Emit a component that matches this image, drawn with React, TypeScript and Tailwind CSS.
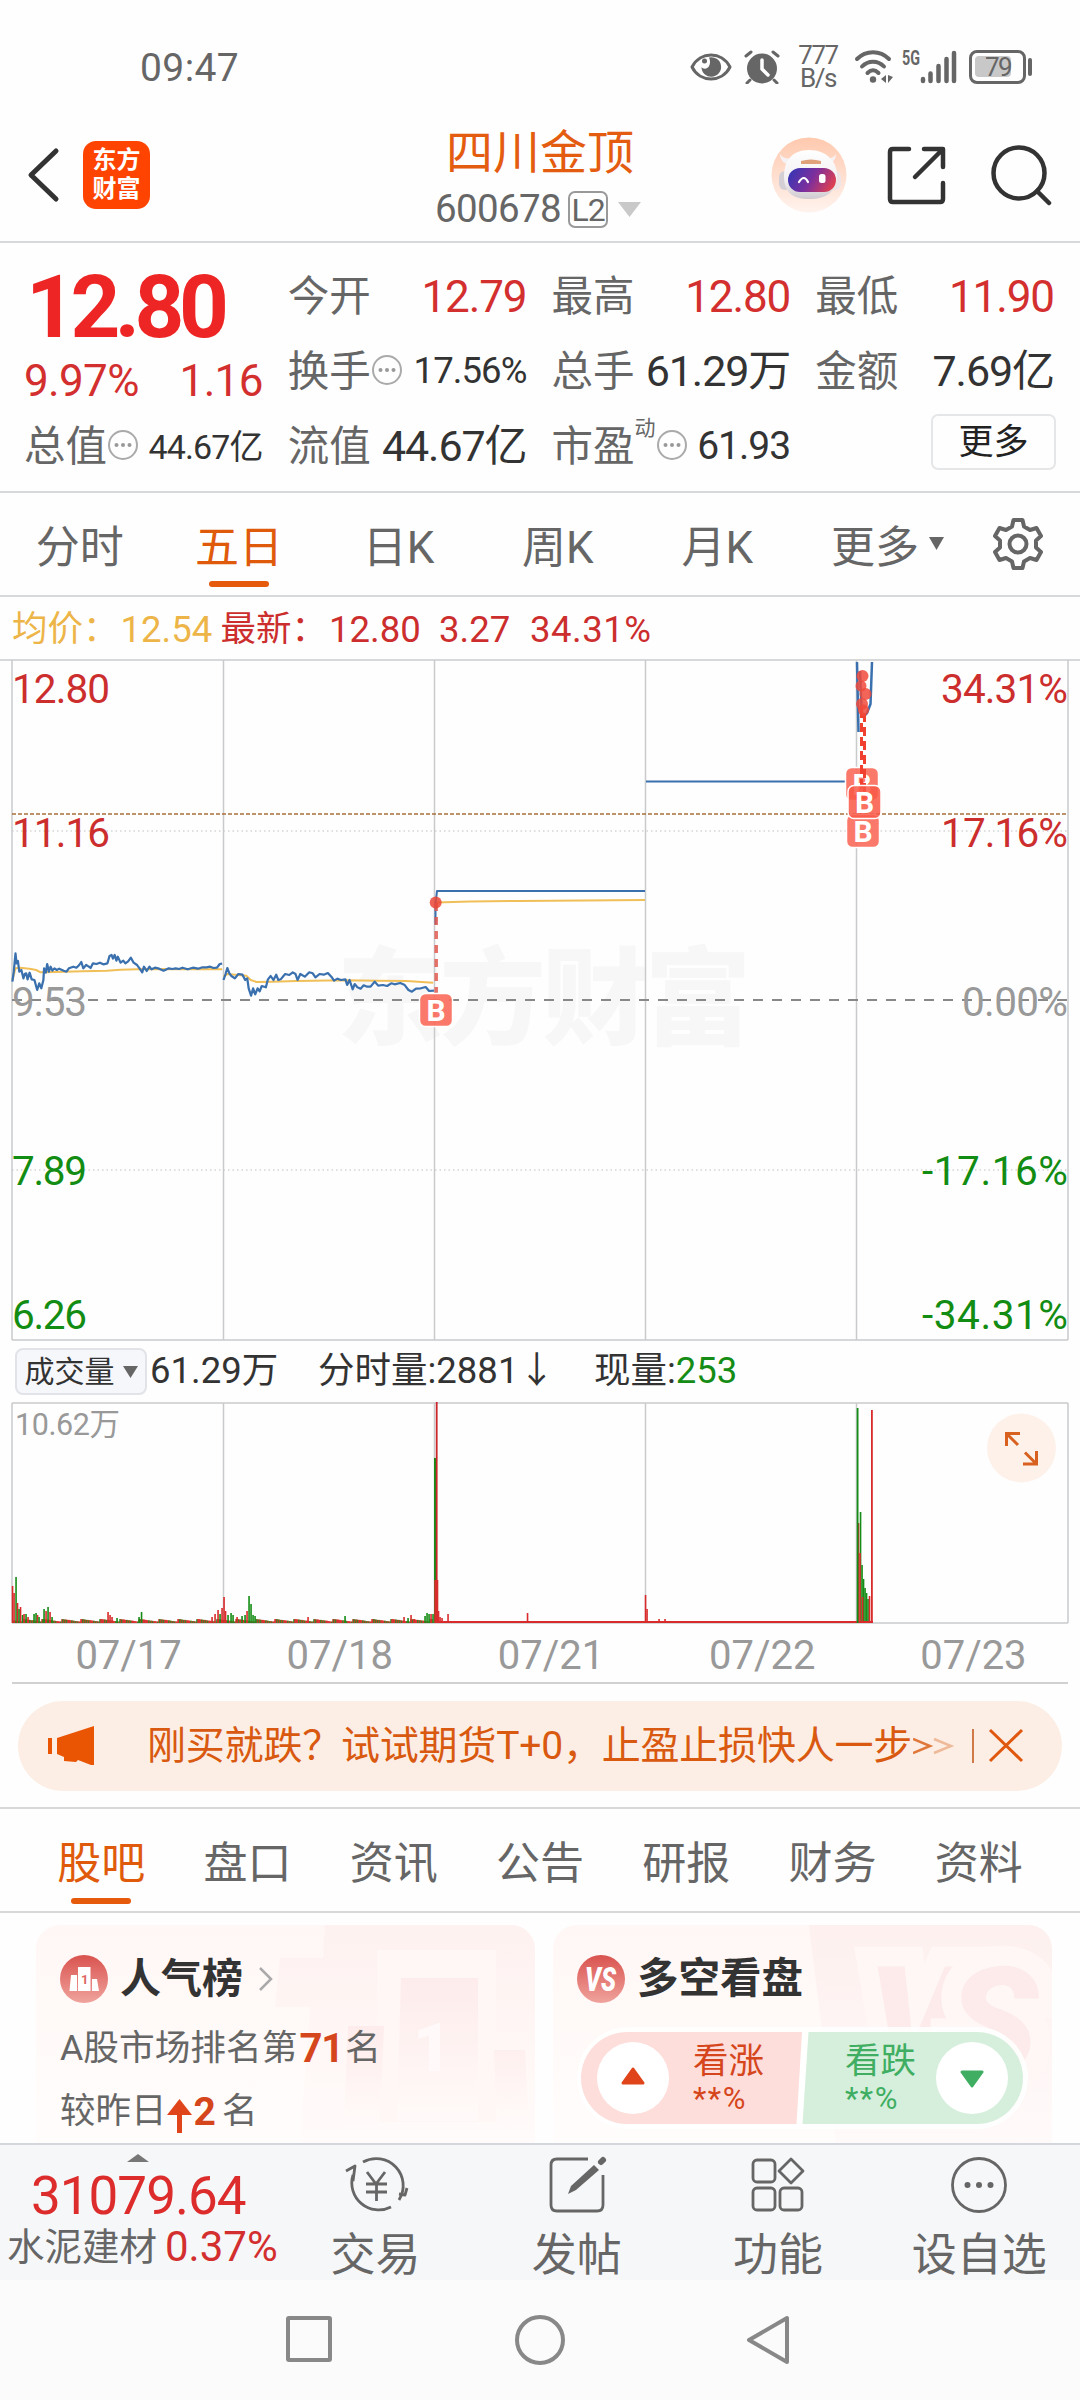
import type { ReactNode } from "react";
import clsx from "clsx";

const GRID_X = [12, 223.5, 434.5, 645.5, 856.5, 1068];
const DATES = ["07/17", "07/18", "07/21", "07/22", "07/23"];

// intraday prices, in chart units (see the scaled group in PriceChart)
const DAY1 =
  "36,245 40,215 45,160 48,190 52,183 56,215 62,210 68,235 72,222 76,220 80,238 86,218 92,238 100,240 108,270 114,250 120,265 126,240 128,205 133,218 137,192 142,215 147,200 152,212 158,205 165,210 172,206 185,212 193,215 200,205 213,200 222,203 230,195 236,186 242,205 250,195 258,200 263,204 270,190 280,192 290,188 300,193 312,190 318,168 324,165 328,176 333,165 338,182 342,170 350,188 358,182 364,190 372,184 380,173 388,188 398,195 405,205 413,217 418,200 426,213 434,200 440,208 450,203 462,206 475,212 490,205 500,207 510,205 520,207 530,203 545,208 560,203 575,206 588,202 600,202 610,200 620,204 630,203 638,192 645,191";
const DAY1_AVG = "36,240 45,205 60,203 90,207 105,210 118,217 160,216 240,214 310,212 350,209 420,207 645,208";
const DAY2 =
  "649,240 655,222 660,204 666,220 672,228 682,235 692,222 704,224 712,240 718,235 722,265 729,287 735,265 741,283 748,265 754,274 760,258 772,262 778,238 786,228 794,240 802,224 808,240 815,238 828,222 840,225 850,217 858,222 864,240 872,222 885,230 898,217 908,220 916,232 928,222 940,224 952,219 962,230 970,242 980,236 990,240 1003,238 1008,255 1015,240 1024,268 1030,252 1038,262 1047,266 1056,256 1066,260 1076,260 1088,245 1098,257 1112,255 1124,258 1136,250 1146,253 1162,249 1174,254 1186,270 1196,275 1208,266 1222,265 1236,261 1246,273 1260,272";
const DAY2_AVG = "649,230 660,222 715,227 728,240 745,246 790,245 860,243 1000,241 1100,242 1180,243 1258,248";

const RED = "#d92b2b";
const GREEN = "#158c15";

type Bar = [x: number, height: number, color: string];

const SPIKES: Bar[] = [
  [12.5, 37, RED], [14, 30, RED], [16, 46, GREEN], [17.5, 20, RED], [19, 14, GREEN], [20.5, 16, RED], [22.5, 8, GREEN],
  [24, 9, RED], [26, 9, GREEN], [28, 6, RED], [34, 9, GREEN], [36, 10, GREEN], [37.5, 8, RED], [39, 6, GREEN],
  [44, 14, GREEN], [46, 12, RED], [48, 16, GREEN], [50, 11, RED], [52, 6, GREEN], [108, 11, RED], [110, 8, RED],
  [112, 6, RED], [117, 5, GREEN], [139, 6, GREEN], [141.5, 11, GREEN], [212, 6, RED], [215, 9, RED], [218, 13, RED],
  [220, 9, GREEN], [222, 15, RED], [224, 26, RED], [225.5, 12, RED], [228, 8, GREEN], [231, 10, GREEN], [233, 8, GREEN],
  [237, 6, RED], [242, 7, GREEN], [245, 8, GREEN], [247, 12, RED], [249, 27, GREEN], [251, 19, GREEN], [253, 8, GREEN],
  [255, 7, GREEN], [308, 6, RED], [345, 7, GREEN], [404, 6, RED], [408, 5, GREEN], [411, 8, RED], [414, 4, RED],
  [425, 7, GREEN], [427, 10, GREEN], [429, 9, GREEN], [431, 9, RED], [433, 9, GREEN], [438.5, 12, RED], [440, 6, RED],
  [442, 5, RED], [448, 9, RED], [527.5, 10, RED], [645.5, 28, RED], [647, 14, RED], [659, 4, RED], [665, 4, RED],
  [860.5, 111, GREEN], [862, 58, GREEN], [863.5, 44, GREEN], [865, 35, GREEN], [866.5, 30, GREEN], [868, 24, GREEN],
  [869.5, 27, RED], [858.5, 100, RED], [860, 70, RED], [862.5, 26, RED],
];

// low-volume minutes between the spikes
const NOISE: Bar[] = Array.from({ length: 420 }, (_, i) => {
  const n = (i * 7919 + 31) % 97;
  return [13 + i, 1.5 + (n % 7) * 0.4, n % 3 === 0 ? GREEN : RED];
});

function MoreDots() {
  return (
    <svg className="mb-1 size-8 shrink-0" viewBox="0 0 32 32" fill="none">
      <circle cx="16" cy="16" r="14" stroke="#aaa" strokeWidth="2" />
      <g fill="#999">
        <circle cx="9.5" cy="16" r="2" />
        <circle cx="16" cy="16" r="2" />
        <circle cx="22.5" cy="16" r="2" />
      </g>
    </svg>
  );
}

function StatusBar() {
  return (
    <div className="flex h-[105px] items-start justify-between pt-[45px] pr-[48px] pl-[140px] text-[#666]">
      <div className="text-[39px] leading-[46px] tracking-[0.400px]">09:47</div>
      <div className="flex h-[43px] items-center">
        {/* eye */}
        <svg className="mr-3 h-7 w-[42px]" viewBox="0 0 42 28">
          <path d="M2 14 C10 -2 32 -2 40 14 C32 30 10 30 2 14Z" fill="none" stroke="#666" strokeWidth="3" strokeLinejoin="round" />
          <path d="M19 4.500 A9.800 9.800 0 1 1 11.500 14 C13 16.500 18 16.500 19.500 12 C20.500 9 20 7 19 4.500Z" fill="#666" />
          <circle cx="14.500" cy="8" r="2.500" fill="#666" />
        </svg>
        {/* alarm */}
        <svg className="mr-[18px] h-[34px] w-9" viewBox="0 0 36 34">
          <circle cx="18" cy="18.500" r="15" fill="#666" />
          <path d="M18 10v9l6 6" fill="none" stroke="#fff" strokeWidth="3.500" strokeLinecap="round" />
          <path d="M2 6l5-4M34 6l-5-4M6 30l-3 3M30 30l3 3" stroke="#666" strokeWidth="3" strokeLinecap="round" />
        </svg>
        <div className="mr-4 w-10 text-center text-[26px] leading-[23px] tracking-[-1.500px]">
          <div>777</div>
          <div>B/s</div>
        </div>
        {/* wifi */}
        <svg className="mr-[7px] h-[34px] w-10" viewBox="0 0 40 34" fill="none" stroke="#666" strokeWidth="4" strokeLinecap="round">
          <path d="M3 9C12 0 26 0 35 9M8 16.500C14 10 24 10 30 16.500M13.500 23C17 19.500 21 19.500 24.500 23" />
          <circle cx="19" cy="29.500" r="3.200" fill="#666" stroke="none" />
          <path d="M32 25v8l-5-4zM34 25v8l5-6z" fill="#666" stroke="none" />
        </svg>
        <svg className="mr-3 h-[34px] w-14 overflow-visible" viewBox="0 0 56 34">
          <text x="1" y="14.500" fill="#666" fontSize="20.500" fontWeight="700" textLength="18" lengthAdjust="spacingAndGlyphs">
            5G
          </text>
          <path d="M22 29v2M29.500 23.500v7.500M37.500 16v15M45.500 9v22M53 3v28" stroke="#666" strokeWidth="4.500" strokeLinecap="round" />
        </svg>
        <div className="flex items-center">
          <div className="flex h-[34px] w-[57px] items-center rounded-[8px] border-3 border-[#666] px-[3px]">
            <div className="h-[21px] w-9 rounded-[4px] bg-[#c8c8c8] pl-2.5 text-[26px] leading-[22px] tracking-[-1.500px]">79</div>
          </div>
          <div className="ml-0.5 h-[18px] w-1 rounded bg-[#666]" />
        </div>
      </div>
    </div>
  );
}

function RobotAvatar() {
  return (
    <svg className="size-[76px]" viewBox="0 0 76 76">
      <defs>
        <linearGradient id="halo" x1="0" y1="0" x2="0" y2="1">
          <stop offset="0" stopColor="#ffc9ae" />
          <stop offset="1" stopColor="#fff3ee" />
        </linearGradient>
        <linearGradient id="visor" x1="0" y1="0.300" x2="1" y2="0.600">
          <stop offset="0" stopColor="#3a35b4" />
          <stop offset="0.500" stopColor="#7d2f9c" />
          <stop offset="1" stopColor="#e0404f" />
        </linearGradient>
        <linearGradient id="shell" x1="0" y1="0" x2="0" y2="1">
          <stop offset="0" stopColor="#fff" />
          <stop offset="0.600" stopColor="#f3f0f2" />
          <stop offset="1" stopColor="#cfcbd0" />
        </linearGradient>
      </defs>
      <circle cx="38" cy="38" r="37.500" fill="url(#halo)" />
      <path d="M9 17c0 6 4 10 10 11l5-7c-7 1-12 1-15-4zM65 17c0 6-4 10-10 11l-5-7c7 1 12 1 15-4z" fill="#f6f1f2" />
      <rect x="8" y="34" width="12" height="19" rx="6" fill="#d4cfd4" />
      <rect x="58" y="34" width="12" height="19" rx="6" fill="#eee4e6" />
      <path d="M38 13c17 0 28 11 28 26s-10 23-28 23-25-8-25-23 8-26 25-26z" fill="url(#shell)" />
      <path d="M30 24q10-3 20 0v3h-20z" fill="#dfa27a" />
      <rect x="17" y="31" width="48" height="24" rx="12" fill="url(#visor)" />
      <path d="M28 45q5-8 9 0" fill="none" stroke="#fff" strokeWidth="2.200" strokeLinecap="round" />
      <rect x="48" y="37" width="6.500" height="9" rx="2.500" fill="#fff" />
    </svg>
  );
}

function Header() {
  return (
    <header className="flex h-[138px] items-center border-b-2 border-[#d6d8da] pt-1">
      <div className="flex w-[360px] items-center pl-[26px]">
        <svg className="h-[56px] w-[34px]" viewBox="0 0 34 56" fill="none" stroke="#333" strokeWidth="5" strokeLinecap="round" strokeLinejoin="round">
          <path d="M30 4 L5 28 L30 52" />
        </svg>
        <div className="ml-[23px] flex h-[68px] w-[67px] flex-col items-center justify-center rounded-[13px] bg-[#ff4401] text-[24px] leading-[29px] font-bold text-white">
          <span>东方</span>
          <span>财富</span>
        </div>
      </div>
      <div className="flex flex-1 flex-col items-center">
        <div className="mt-3 text-[47px] leading-[58px] text-[#e45c10]">四川金顶</div>
        <div className="-mt-px mr-1 flex h-[58px] items-center text-[38.500px] text-[#666]">
          <span className="tracking-[-0.600px]">600678</span>
          <span className="ml-[7px] flex h-[37px] w-10 items-center justify-center rounded-[7px] border-2 border-[#999] text-[32px] tracking-[-1px]">L2</span>
          <svg className="ml-2.5 h-[15px] w-[23px]" viewBox="0 0 23 15">
            <path d="M0 0h23l-11.500 15z" fill="#c9c9c9" />
          </svg>
        </div>
      </div>
      <div className="flex w-[360px] items-center justify-end pr-7">
        <RobotAvatar />
        <svg className="ml-[39px] size-[60px]" viewBox="0 0 60 60" fill="none" stroke="#333" strokeWidth="4.500" strokeLinecap="round" strokeLinejoin="round">
          <path d="M23 4H7q-3 0-3 3v47q0 3 3 3h47q3 0 3-3V38M38 4H57V22M56 5 29 32" />
        </svg>
        <svg className="ml-[44px] size-[62px]" viewBox="0 0 62 62" fill="none" stroke="#333" strokeWidth="4.500" strokeLinecap="round">
          <circle cx="29" cy="29" r="25.500" />
          <path d="M47 47 L59 59" />
        </svg>
      </div>
    </header>
  );
}

interface QuoteProps {
  label: ReactNode;
  value: string;
  size?: string;
  color?: string;
}

function Quote({ label, value, size = "text-[43px]", color = "text-[#333]" }: QuoteProps) {
  return (
    <div className="flex h-[75px] items-center justify-between">
      <div className="-ml-0.5 flex items-center text-[41.500px] text-[#666]">{label}</div>
      <div className={clsx("tracking-[-0.025em] whitespace-nowrap", size, color)}>{value}</div>
    </div>
  );
}

function QuotePanel() {
  return (
    <section className="grid h-[250px] grid-cols-4 gap-x-[27px] border-b-2 border-[#d6d8da] px-[26px] pt-4 whitespace-nowrap">
      <div>
        <div className="h-[93px] text-[87px] leading-[97px] font-bold tracking-[-5.500px] text-[#ee2525]">12.80</div>
        <div className="-ml-0.5 flex h-[57px] items-center justify-between text-[44px] tracking-[-0.015em] text-[#d32f2f]">
          <span>9.97%</span>
          <span>1.16</span>
        </div>
        <Quote label={<>总值<MoreDots /></>} value="44.67亿" size="text-[34px]" />
      </div>
      <div>
        <Quote label="今开" value="12.79" size="text-[44px]" color="text-[#d32f2f]" />
        <Quote label={<>换手<MoreDots /></>} value="17.56%" size="text-[36.500px]" />
        <Quote label="流值" value="44.67亿" />
      </div>
      <div>
        <Quote label="最高" value="12.80" size="text-[44px]" color="text-[#d32f2f]" />
        <Quote label="总手" value="61.29万" />
        <Quote label={<>市盈<span className="mb-9 text-[21px]">动</span><MoreDots /></>} value="61.93" size="text-[39px]" />
      </div>
      <div>
        <Quote label="最低" value="11.90" size="text-[44px]" color="text-[#d32f2f]" />
        <Quote label="金额" value="7.69亿" />
        <div className="mt-[5px] -mr-0.5 flex justify-end">
          <div className="flex h-14 w-[125px] items-center justify-center rounded-[7px] border-2 border-[#e4e6e8] text-[35px] text-[#222]">更多</div>
        </div>
      </div>
    </section>
  );
}

function PeriodTabs() {
  const tabs = ["分时", "五日", "日K", "周K", "月K"];
  return (
    <nav className="flex h-[104px] border-b-2 border-[#d6d8da] text-[44px] text-[#666]">
      <div className="grid w-[797px] grid-cols-5">
        {tabs.map((tab) => (
          <div key={tab} className={clsx("flex flex-col items-center pt-6", tab === "五日" && "text-[#e05a0c]")}>
            <span className="leading-[62px]">{tab}</span>
            {tab === "五日" && <span className="mt-0.5 h-1.5 w-[60px] rounded-full bg-[#e65a0b]" />}
          </div>
        ))}
      </div>
      <div className="flex flex-1 items-start pt-6 pl-[34px]">
        <span className="leading-[62px]">更多</span>
        <svg className="mt-[20px] ml-2.5 h-[13px] w-[15px]" viewBox="0 0 15 13">
          <path d="M0 0h15l-7.500 13z" fill="#666" />
        </svg>
        <svg className="ml-[47px] h-[54px] w-[54px]" viewBox="0 0 54 54" fill="none" stroke="#666" strokeWidth="4" strokeLinejoin="round">
          <path d="M22.500 3h9l1.500 6.500 6 3.500 6.500-2 4.500 8-5 4.500v7l5 4.500-4.500 8-6.500-2-6 3.500-1.500 6.500h-9l-1.500-6.500-6-3.500-6.500 2-4.500-8 5-4.500v-7l-5-4.500 4.500-8 6.500 2 6-3.500z" />
          <circle cx="27" cy="27" r="8.500" />
        </svg>
      </div>
    </nav>
  );
}

function BuyMark({ x, y, opacity = 0.9 }: { x: number; y: number; opacity?: number }) {
  return (
    <g>
      <rect x={x} y={y} width="33" height="33" rx="6" fill="#fa6a5a" fillOpacity={opacity} stroke="#fff" strokeWidth="1.500" />
      <text x={x + 16.5} y={y + 27} fill="#fff" fontSize="30" fontWeight="700" textAnchor="middle">
        B
      </text>
    </g>
  );
}

function PriceChart() {
  const left = [
    { y: 44, text: "12.80", w: 98, fill: "#cc2e2e" },
    { y: 188, text: "11.16", w: 98, fill: "#cc2e2e" },
    { y: 357, text: "9.53", w: 75, fill: "#999" },
    { y: 526, text: "7.89", w: 75, fill: "#128c12" },
    { y: 670, text: "6.26", w: 75, fill: "#128c12" },
  ];
  const right = [
    { y: 44, text: "34.31%", w: 127, fill: "#cc2e2e" },
    { y: 188, text: "17.16%", w: 127, fill: "#cc2e2e" },
    { y: 357, text: "0.00%", w: 106, fill: "#999" },
    { y: 526, text: "-17.16%", w: 146, fill: "#128c12" },
    { y: 670, text: "-34.31%", w: 146, fill: "#128c12" },
  ];
  return (
    <svg className="block h-[682px] w-[1080px]" viewBox="0 0 1080 682">
      <g stroke="#c9cacc" strokeWidth="1.500" fill="none">
        <path d="M12 681H1068" />
        <path d="M12 172H1068M12 511H1068" stroke="#d5d5d5" strokeDasharray="1.500 3" />
      </g>
      <text x="337" y="377" fill="#f7f7f8" fontSize="106" fontWeight="900" textLength="414">
        东方财富
      </text>
      <g stroke="#c9cacc" strokeWidth="1.500">
        {GRID_X.map((x) => (
          <path key={x} d={`M${x} 1V681`} />
        ))}
      </g>
      <path d="M12 341H1068" stroke="#888" strokeWidth="2" strokeDasharray="10 9" />
      <path d="M12 155H1066" stroke="#a8703c" strokeWidth="1.500" strokeDasharray="4 2" />

      <g fontSize="40.500">
        {left.map((l) => (
          <text key={l.text} x="12" y={l.y} fill={l.fill} textLength={l.w}>
            {l.text}
          </text>
        ))}
        {right.map((r) => (
          <text key={r.text} x={1068 - r.w} y={r.y} fill={r.fill} textLength={r.w}>
            {r.text}
          </text>
        ))}
      </g>

      <g fill="none" strokeWidth="2" strokeLinejoin="round">
        <g transform="translate(0 241) scale(0.34440 0.33333)">
          <g stroke="#f0bf58" strokeWidth="6">
            <polyline points={DAY1_AVG} />
            <polyline points={DAY2_AVG} />
          </g>
          <g stroke="#3a70ae" strokeWidth="6.500">
            <polyline points={DAY1} />
            <polyline points={DAY2} />
          </g>
        </g>
        <path d="M436 243.500L470 242.500L520 242L645 241" stroke="#f0bf58" />
        <path d="M435.500 265.500V245.500L437 232H645" stroke="#3a70ae" />
        <path d="M646 122.500H845" stroke="#3a70ae" />
        <path d="M857 3L858.500 73M860 12L861.500 50L863 58L867 54L870.500 45L872 3" stroke="#3a70ae" strokeWidth="2.500" />
        <path d="M436.200 244V335" stroke="#e0584d" strokeOpacity="0.850" strokeWidth="3.500" strokeDasharray="8 6" />
      </g>
      <circle cx="435.700" cy="243.500" r="6" fill="#ea4636" fillOpacity="0.850" />
      <BuyMark x={419.5} y={334.5} />
      <BuyMark x={845.5} y={108.5} />
      <BuyMark x={846.5} y={155.5} />
      <g stroke="#ef4030" strokeWidth="3">
        <path d="M861.500 50V140" strokeDasharray="9 5" />
        <path d="M864.500 54V140" strokeDasharray="9 5" />
      </g>
      <g fill="#f04a3b" fillOpacity="0.850">
        <circle cx="862.500" cy="17" r="6" />
        <circle cx="861" cy="27" r="5.500" />
        <circle cx="865.500" cy="35" r="6" />
        <circle cx="862" cy="45" r="6" />
        <circle cx="863.500" cy="51" r="5.500" />
      </g>
      <rect x="848" y="126.500" width="33" height="33" rx="6" fill="#f8402a" fillOpacity="0.700" />
      <BuyMark x={848} y={126.5} opacity={0.5} />
    </svg>
  );
}

function VolumeHeader() {
  return (
    <div className="flex h-[61px] items-center pl-[15px] text-[36.500px] text-[#333]">
      <div className="flex h-[47px] w-[132px] items-center justify-center gap-2 rounded-[8px] border-2 border-[#e1e3e8] bg-[#f6f7fb] text-[30px]">
        成交量
        <svg className="h-3 w-[15px]" viewBox="0 0 15 12">
          <path d="M0 0h15l-7.500 12z" fill="#666" />
        </svg>
      </div>
      <span className="ml-[3px] w-[168px]">61.29万</span>
      <span className="w-[276px]">分时量:2881↓</span>
      <span>
        现量:<span className="text-[#158c15]">253</span>
      </span>
    </div>
  );
}

function VolumeChart() {
  return (
    <svg className="block h-[222px] w-[1080px]" viewBox="0 0 1080 222">
      <g stroke="#c9cacc" strokeWidth="1.500" fill="none">
        {GRID_X.map((x) => (
          <path key={x} d={`M${x} 1V221`} />
        ))}
        <path d="M12 1H1068M12 221H1068" />
      </g>
      <text x="15" y="33" fill="#999" fontSize="30.500" textLength="105">
        10.62万
      </text>
      {[...NOISE, ...SPIKES].map(([x, h, color], i) => (
        <rect key={i} x={x - 0.75} y={221 - h} width="1.600" height={h} fill={color} />
      ))}
      <path d="M434 220H873" stroke={RED} strokeWidth="2" />
      <rect x="434" y="56" width="2" height="165" fill={GREEN} />
      <rect x="435.800" y="0" width="1.800" height="221" fill="#c9252b" />
      <rect x="434.300" y="178" width="4" height="43" fill={RED} />
      <rect x="856.700" y="6" width="1.800" height="215" fill={GREEN} />
      <rect x="871" y="8" width="1.800" height="213" fill={RED} />
      <circle cx="1021.500" cy="46" r="34.500" fill="#fdf1ea" />
      <g fill="none" stroke="#d8611f" strokeWidth="3">
        <path d="M1006.500 44V31.500H1020M1007 32L1018 43M1036.500 49V62H1023M1036 61.500L1025 50.500" />
      </g>
    </svg>
  );
}

function PromoBanner() {
  return (
    <div className="mx-[18px] mt-[17px] flex h-[90px] items-center rounded-full bg-[#fceee5] pl-[30px] text-[39px] text-[#d8590f]">
      <svg className="h-10 w-12" viewBox="0 0 48 40" fill="#ea5504">
        <path d="M0 12h4v16H0zM9 12L46 0V39H43L30 34L28 36L16 35V31L9 28Z" />
      </svg>
      <span className="ml-[51px] whitespace-nowrap tracking-[-0.200px]">刚买就跌？试试期货T+0，止盈止损快人一步</span>
      <svg className="ml-px h-9 w-[112px]" viewBox="0 0 112 36" fill="none" strokeWidth="2.500">
        <path d="M0 11L17 18L0 25" stroke="#d8590f" strokeOpacity="0.800" />
        <path d="M21 11L38 18L21 25" stroke="#d8590f" strokeOpacity="0.350" />
        <path d="M60 1V35" stroke="#d07a4a" strokeWidth="2" />
        <path d="M77 2L109 33M109 2L77 33" stroke="#e0580f" strokeWidth="3" />
      </svg>
    </div>
  );
}

function InfoTabs() {
  const tabs = ["股吧", "盘口", "资讯", "公告", "研报", "财务", "资料"];
  return (
    <nav className="mt-4 grid h-[106px] grid-cols-7 border-y-2 border-[#d6d8da] px-7 text-[44px] text-[#666]">
      {tabs.map((tab, i) => (
        <div key={tab} className={clsx("flex flex-col items-center pt-[23px]", i === 0 && "text-[#e05a0c]")}>
          <span className="leading-[64px]">{tab}</span>
          {i === 0 && <span className="mt-0.5 h-1.5 w-[60px] rounded-full bg-[#e65a0b]" />}
        </div>
      ))}
    </nav>
  );
}

function RankCard() {
  return (
    <div className="relative h-[220px] w-[499px] overflow-hidden rounded-t-[24px] bg-linear-to-b from-[#fff7f5] to-[#fffdfc] pt-7 pl-6">
      <svg className="absolute top-0 right-0 h-[220px] w-[260px]" viewBox="0 0 260 220">
        <defs>
          <linearGradient id="podium" x1="0" y1="0" x2="0" y2="1">
            <stop offset="0" stopColor="#fdeceb" />
            <stop offset="1" stopColor="#fffaf9" />
          </linearGradient>
        </defs>
        <path d="M50 0H260V220H25L35 82H0L5 33H48Z" fill="url(#podium)" opacity="0.500" />
        <path d="M102 25H221V197H102Z" fill="#fff7f5" />
        <path d="M126 53H203V196H122Z" fill="url(#podium)" />
        <path d="M73 101H109L105 196H69ZM219 125H250L254 196H222Z" fill="url(#podium)" />
        <text x="138" y="146" fill="#fffaf9" fontSize="66" fontWeight="900">
          1
        </text>
      </svg>
      <div className="relative flex h-[52px] items-center">
        <svg className="size-12" viewBox="0 0 48 48">
          <defs>
            <linearGradient id="badge" x1="0" y1="0" x2="0" y2="1">
              <stop offset="0" stopColor="#d9534f" />
              <stop offset="1" stopColor="#f0a39d" />
            </linearGradient>
          </defs>
          <circle cx="24" cy="24" r="24" fill="url(#badge)" />
          <path d="M11 20H17V36H9.500ZM32 24H37L39 36H32ZM18 12H30.500V36H18Z" fill="#fff" />
          <text x="21" y="29" fill="#dd6862" fontSize="13" fontWeight="700">
            1
          </text>
        </svg>
        <span className="ml-3 text-[41px] font-bold text-[#333]">人气榜</span>
        <svg className="ml-4 h-6 w-[14px]" viewBox="0 0 14 24" fill="none" stroke="#aaa" strokeWidth="2.500">
          <path d="M1 1L12 12L1 23" />
        </svg>
      </div>
      <div className="relative mt-[18px] flex h-[52px] items-center text-[35.700px] text-[#666]">
        A股市场排名第<b className="pl-0.5 text-[40px] tracking-[-1px] text-[#d5461c]">71</b>
        <span className="ml-0.5">名</span>
      </div>
      <div className="relative mt-[11px] flex h-[52px] items-center text-[35.500px] text-[#666]">
        较昨日
        <svg className="mt-2 h-[34px] w-[25px]" viewBox="0 0 25 34" fill="#e0441a">
          <path d="M12.500 0L25 16H15V34H10V16H0Z" />
        </svg>
        <b className="ml-0.5 text-[39px] text-[#d5461c]">2</b>
        <span className="ml-1.5">名</span>
      </div>
    </div>
  );
}

function VoteCard() {
  return (
    <div className="relative h-[220px] w-[499px] overflow-hidden rounded-t-[24px] bg-linear-to-b from-[#fff7f5] to-[#fffdfc] pt-7 pl-6">
      <svg className="absolute top-0 right-0 h-[220px] w-[250px]" viewBox="0 0 250 220">
        <defs>
          <linearGradient id="versus" x1="0" y1="0" x2="0" y2="1">
            <stop offset="0" stopColor="#fdf0ee" />
            <stop offset="1" stopColor="#fffafa" />
          </linearGradient>
        </defs>
        <path d="M7 0H250V220H34Z" fill="url(#versus)" />
        <text
          x="66"
          y="147"
          fill="#fcebea"
          fontSize="148"
          fontWeight="900"
          fontStyle="italic"
          stroke="#fff7f5"
          strokeWidth="40"
          paintOrder="stroke"
          textLength="170"
        >
          VS
        </text>
      </svg>
      <div className="relative flex h-[52px] items-center">
        <svg className="size-12" viewBox="0 0 48 48">
          <circle cx="24" cy="24" r="24" fill="url(#badge)" />
          <text x="8" y="36" fill="#fff" fontSize="33" fontWeight="900" fontStyle="italic" textLength="31" lengthAdjust="spacingAndGlyphs">
            VS
          </text>
        </svg>
        <span className="ml-3 text-[41.500px] font-bold text-[#333]">多空看盘</span>
      </div>
      <div className="relative mt-[22px] flex h-[102px] w-[451px] justify-between">
        <svg className="absolute inset-0 h-[102px] w-[451px]" viewBox="0 0 451 102">
          <rect x="0" y="0" width="451" height="102" rx="51" fill="#fff" fillOpacity="0.850" />
          <path d="M50 5H225L219.500 97H50A46 46 0 0 1 50 5Z" fill="#fddedb" />
          <path d="M231.500 5H400A46 46 0 0 1 400 97H225.500Z" fill="#d6efdc" />
        </svg>
        <div className="relative flex items-center pl-[20px] text-[#d5461c]">
          <div className="flex size-[72px] items-center justify-center rounded-full bg-white">
            <svg className="mb-1 h-[18px] w-[24px]" viewBox="0 0 24 18">
              <path d="M12 2L22 16H2Z" fill="#e0441a" stroke="#e0441a" strokeWidth="3" strokeLinejoin="round" />
            </svg>
          </div>
          <div className="ml-[24px]">
            <div className="text-[35.500px] leading-[42px]">看涨</div>
            <div className="text-[31px] leading-[34px] tracking-[1.500px]">**%</div>
          </div>
        </div>
        <div className="relative flex items-center pr-[20px] text-[#3fae62]">
          <div className="mr-[20px]">
            <div className="text-[35.500px] leading-[42px]">看跌</div>
            <div className="text-[31px] leading-[34px] tracking-[1.500px]">**%</div>
          </div>
          <div className="flex size-[72px] items-center justify-center rounded-full bg-white">
            <svg className="mt-0.5 h-[18px] w-[24px]" viewBox="0 0 24 18">
              <path d="M12 16L22 2H2Z" fill="#3fae62" stroke="#3fae62" strokeWidth="3" strokeLinejoin="round" />
            </svg>
          </div>
        </div>
      </div>
    </div>
  );
}

const ACTIONS = [
  {
    label: "交易",
    icon: (
      <>
        <path d="M22 11A27 27 0 0 1 58 49M12 24A27 27 0 0 0 50 56M5 20L14 15L12 30M66 37L64 44L58 43" />
        <path d="M26 21L35 33L44 21M25 33H46M25 41H46M35.500 33V50" />
      </>
    ),
  },
  {
    label: "发帖",
    icon: (
      <>
        <path d="M46 8H15Q9 8 9 14V54Q9 60 15 60H55Q61 60 61 54V24" />
        <path d="M59 11L61 9" strokeWidth="6" strokeLinecap="round" />
        <path d="M52 14L57 19L34 39L26 43L29 35Z" fill="#666" stroke="none" />
      </>
    ),
  },
  {
    label: "功能",
    icon: (
      <>
        <rect x="10" y="9" width="22" height="22" rx="4" />
        <rect x="10" y="37" width="22" height="22" rx="4" />
        <rect x="37" y="37" width="22" height="22" rx="4" />
        <path d="M48 8L60 20L48 32L36 20Z" />
      </>
    ),
  },
  {
    label: "设自选",
    icon: (
      <>
        <circle cx="35" cy="34" r="26.500" />
        <g fill="#666" stroke="none">
          <circle cx="23.500" cy="34" r="3" />
          <circle cx="35" cy="34" r="3" />
          <circle cx="46.500" cy="34" r="3" />
        </g>
      </>
    ),
  },
];

function BottomBar() {
  return (
    <div className="flex h-[137px] border-t-2 border-[#d3d6da] bg-[#f6f7f9] text-[#666]">
      <div className="flex w-[273px] flex-col pt-[9px] whitespace-nowrap">
        <svg className="ml-[127px] h-[8px] w-[22px]" viewBox="0 0 22 8">
          <path d="M11 0L22 8H0Z" fill="#777" />
        </svg>
        <div className="pl-[31px] text-[53px] leading-[69px] tracking-[-1px] text-[#dd2c2c]">31079.64</div>
        <div className="flex items-center pl-[7px] text-[37.500px] leading-[32px]">
          水泥建材<span className="ml-2 text-[42px] text-[#d32f2f]">0.37%</span>
        </div>
      </div>
      <div className="ml-0.5 grid flex-1 grid-cols-4">
        {ACTIONS.map((a) => (
          <div key={a.label} className="flex flex-col items-center pt-1.5">
            <svg className="h-[68px] w-[70px]" viewBox="0 0 70 68" fill="none" stroke="#666" strokeWidth="2.800" strokeLinejoin="round">
              {a.icon}
            </svg>
            <span className="mt-[7px] text-[45px] leading-[60px]">{a.label}</span>
          </div>
        ))}
      </div>
    </div>
  );
}

function SystemNav() {
  return (
    <div className="flex h-[120px] justify-center bg-[#fbfbfb] pt-[34px]">
      <svg className="h-[52px] w-[510px]" viewBox="0 0 510 52" fill="none" stroke="#888" strokeWidth="4" strokeLinejoin="round">
        <rect x="3" y="4" width="42" height="42" rx="1" />
        <circle cx="255" cy="26" r="23" />
        <path d="M502 4V48L464 26Z" />
      </svg>
    </div>
  );
}

export default function App() {
  return (
    <div className="flex h-[2400px] w-[1080px] flex-col overflow-hidden bg-[#fefefe] font-[Roboto,'Noto_Sans_CJK_SC',sans-serif] leading-none">
      <StatusBar />
      <Header />
      <QuotePanel />
      <PeriodTabs />
      <div className="flex h-[64px] items-center border-b-2 border-[#d6d8da] pt-1 pl-3 text-[35.500px] whitespace-pre text-[#cc2e2e]">
        <span className="text-[#edb548]">均价：</span>
        <span className="w-[102px] pl-0.5 text-[36.500px] text-[#edb548]">12.54</span>
        <span>最新：</span>
        <span className="ml-0.5 w-[110px] text-[36.500px]">12.80</span>
        <span className="w-[91px] text-[36.500px]">3.27</span>
        <span className="text-[36.500px] tracking-[0.500px]">34.31%</span>
      </div>
      <div className="-mt-0.5">
        <PriceChart />
      </div>
      <VolumeHeader />
      <VolumeChart />
      <div className="mx-3 h-[60px] border-b-2 border-[#cfd1d3]">
        <div className="ml-[11px] grid h-[60px] w-[1056px] grid-cols-5 items-center pt-1 text-center text-[40px] text-[#999]">
          {DATES.map((d) => (
            <span key={d}>{d}</span>
          ))}
        </div>
      </div>
      <PromoBanner />
      <InfoTabs />
      <div className="flex h-[230px] justify-between overflow-hidden pt-3 pr-[28px] pl-9">
        <RankCard />
        <VoteCard />
      </div>
      <BottomBar />
      <SystemNav />
    </div>
  );
}
